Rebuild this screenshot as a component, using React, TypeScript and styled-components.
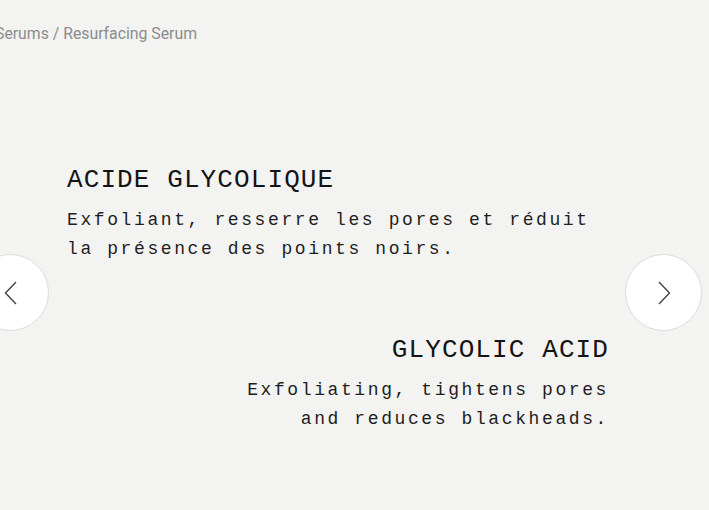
import { FC } from "react";
import styled, { createGlobalStyle } from "styled-components";

interface TIngredient {
  name: string;
  text: string[];
  align: "left" | "right";
}

const ingredients: TIngredient[] = [
  {
    name: "ACIDE GLYCOLIQUE",
    text: ["Exfoliant, resserre les pores et réduit", "la présence des points noirs."],
    align: "left",
  },
  {
    name: "GLYCOLIC ACID",
    text: ["Exfoliating, tightens pores", "and reduces blackheads."],
    align: "right",
  },
];

const Chevron: FC<{ dir: "left" | "right" }> = ({ dir }) => (
  <svg width="14" height="24" viewBox="0 0 14 24" fill="none">
    <path
      d={dir === "left" ? "M12 1 L1.5 12 L12 23" : "M2 1 L12.5 12 L2 23"}
      stroke="#444"
      strokeWidth="1.4"
    />
  </svg>
);

const Ingredient: FC<TIngredient> = ({ name, text, align }) => (
  <Block align={align}>
    <Name>{name}</Name>
    <Text>
      {text.map((line, i) => (
        <span key={i}>
          {line}
          <br />
        </span>
      ))}
    </Text>
  </Block>
);

const App = () => {
  return (
    <>
      <GlobalStyle />
      <Page>
        <Breadcrumb>Serums / Resurfacing Serum</Breadcrumb>
        <Slider>
          <Slide>
            {ingredients.map((item, i) => (
              <Ingredient {...item} key={i} />
            ))}
          </Slide>
          <Arrow side="left" aria-label="Previous">
            <Chevron dir="left" />
          </Arrow>
          <Arrow side="right" aria-label="Next">
            <Chevron dir="right" />
          </Arrow>
        </Slider>
      </Page>
    </>
  );
};

const GlobalStyle = createGlobalStyle`
  html, body {
    margin: 0;
    padding: 0;
    background: #f3f3f2;
  }
  body {
    overflow: hidden;
  }
`;

const Page = styled.div`
  width: 709px;
  height: 510px;
  background: #f3f3f2;
  overflow: hidden;
  display: flex;
  flex-direction: column;
`;

const Breadcrumb = styled.div`
  font-family: Roboto, "Liberation Sans", sans-serif;
  font-size: 15.8px;
  color: #8c8c8c;
  margin: 25px 0 0 -5px;
  line-height: 18px;
`;

const Slider = styled.div`
  position: relative;
  flex: 1;
`;

const Slide = styled.div`
  width: 542px;
  margin: 122px 0 0 67px;
  display: flex;
  flex-direction: column;
  gap: 71px;
`;

const Block = styled.div<{ align: "left" | "right" }>`
  text-align: ${(p) => p.align};
  font-family: "Liberation Mono", "DejaVu Sans Mono", monospace;
`;

const Name = styled.h2`
  margin: 0 0 11px;
  font-size: 26px;
  font-weight: 400;
  letter-spacing: 1.1px;
  line-height: 30px;
  color: #141414;
`;

const Text = styled.p`
  margin: 0;
  font-size: 18px;
  letter-spacing: 2.6px;
  line-height: 29px;
  color: #1e1e1e;
`;

const Arrow = styled.button<{ side: "left" | "right" }>`
  position: absolute;
  top: 211px;
  ${(p) => (p.side === "left" ? "left: -28px;" : "right: 7px;")}
  width: 77px;
  height: 77px;
  border-radius: 50%;
  background: #ffffff;
  border: 1px solid #dcdcdc;
  display: flex;
  align-items: center;
  justify-content: center;
  padding: 0;
  cursor: pointer;
`;

export default App;
